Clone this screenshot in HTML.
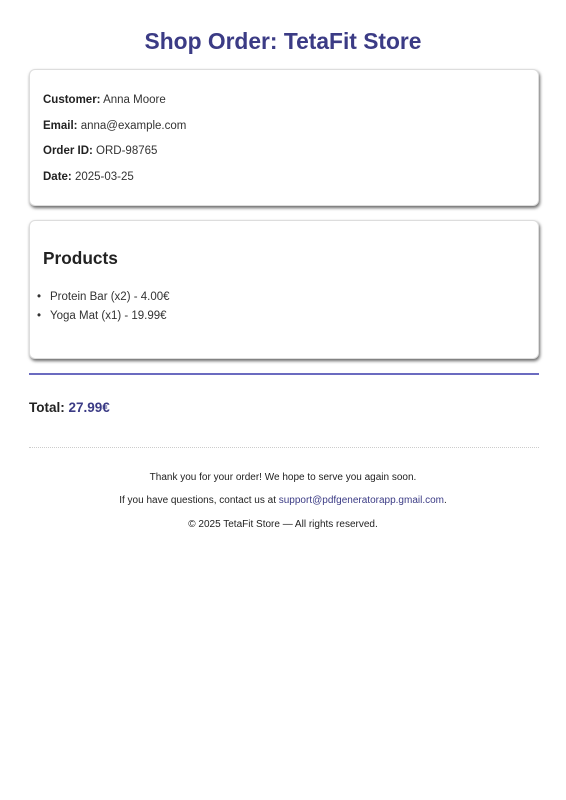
<!DOCTYPE html>
<html><head><meta charset="utf-8"><style>
body{margin:0;width:566px;height:800px;background:#fff;font-family:"Liberation Sans",Arial,sans-serif;color:#333;position:relative}
.a{position:absolute;white-space:nowrap}
h1{position:absolute;left:0;width:566px;top:26px;margin:0;text-align:center;font-size:22.8px;font-weight:bold;color:#3b3b85;line-height:30px}
.card{position:absolute;left:29px;width:510px;background:#fff;border:1px solid #ddd;border-radius:6px;box-shadow:1px 2px 3px rgba(0,0,0,.6);box-sizing:border-box}
.t{font-size:11.5px;line-height:14px}
b{color:#222}
.f{left:0;width:566px;text-align:center;font-size:10px;color:#222;line-height:13px}
</style></head><body>
<h1>Shop Order: TetaFit Store</h1>
<div class="card" style="top:69px;height:137px"></div>
<div class="a t" style="left:43px;top:93px"><b>Customer:</b> Anna Moore</div>
<div class="a t" style="left:43px;top:119px"><b>Email:</b> anna@example.com</div>
<div class="a t" style="left:43px;top:144px"><b>Order ID:</b> ORD-98765</div>
<div class="a t" style="left:43px;top:170px"><b>Date:</b> 2025-03-25</div>
<div class="card" style="top:220px;height:139px"></div>
<div class="a" style="left:43px;top:247px;font-size:17.3px;font-weight:bold;color:#222;line-height:22px">Products</div>
<div class="a t" style="left:37px;top:290px">•</div>
<div class="a t" style="left:50px;top:290px">Protein Bar (x2) - 4.00€</div>
<div class="a t" style="left:37px;top:309px">•</div>
<div class="a t" style="left:50px;top:309px">Yoga Mat (x1) - 19.99€</div>
<div class="a" style="left:29px;top:373px;width:510px;height:2px;background:#6b6bc0"></div>
<div class="a" style="left:29px;top:399px;font-size:13.5px;font-weight:bold;color:#222;line-height:17px">Total: <span style="color:#3b3b85">27.99€</span></div>
<div class="a" style="left:29px;top:447px;width:510px;border-top:1px dotted #ccc"></div>
<div class="a f" style="top:471px">Thank you for your order! We hope to serve you again soon.</div>
<div class="a f" style="top:494px">If you have questions, contact us at <span style="color:#3b3b85">support@pdfgeneratorapp.gmail.com</span>.</div>
<div class="a f" style="top:518px">© 2025 TetaFit Store — All rights reserved.</div>
</body></html>
